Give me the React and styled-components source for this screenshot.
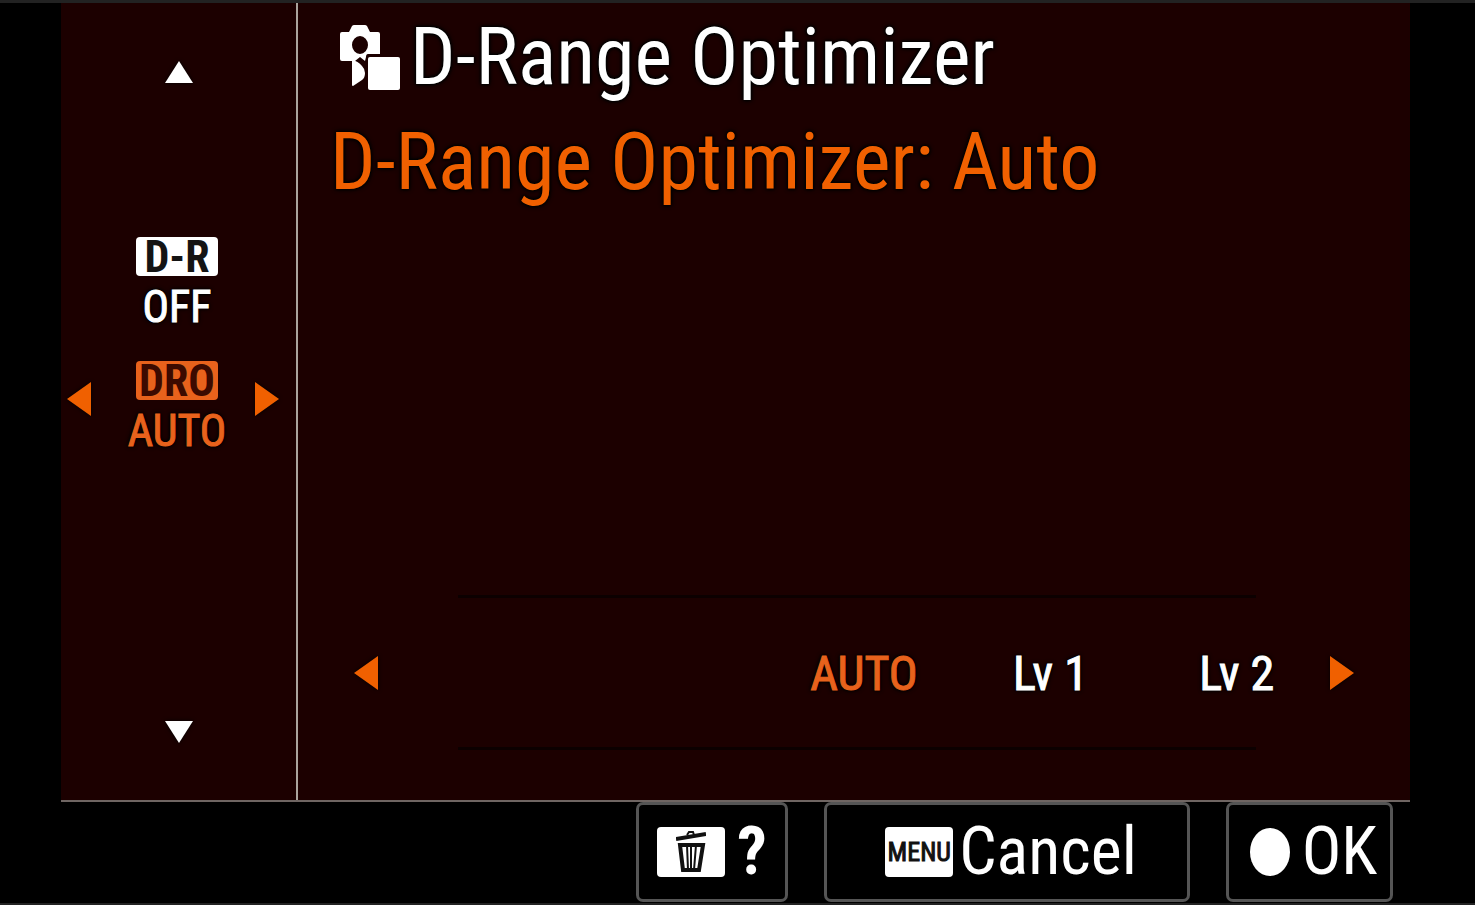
import React, { useState } from "react";
import styled, { createGlobalStyle, css } from "styled-components";

const GlobalStyle = createGlobalStyle`
  *, *::before, *::after { box-sizing: border-box; }
  html, body { margin: 0; background: #000; }
  body, button {
    font-family: "Roboto Condensed", "Liberation Sans Narrow", Roboto, sans-serif;
  }
  h1, p { margin: 0; font-weight: 400; }
`;

const orange = "#f06000";
const softOrange = "#e8621c";

const outline = css`
  text-shadow: 0 0 2px #000, 0 0 3px #000, 0 0 4px #000, 0 0 5px #000;
`;

const Screen = styled.div`
  display: flex;
  flex-direction: column;
  min-height: 100vh;
  padding: 0 65px 0 61px;
  background: #000;
  border-top: 3px solid #222;
  border-bottom: 2px solid #222;
`;

const Panel = styled.div`
  flex: 1;
  display: flex;
  background: #1c0000;
  border-bottom: 2px solid #6f6562;
`;

const Sidebar = styled.nav`
  flex: 0 0 237px;
  display: flex;
  flex-direction: column;
  align-items: center;
  padding: 58px 0 57px;
  border-right: 2px solid #aaa39c;
`;

const ArrowButton = styled.button`
  display: block;
  padding: 0;
  border: 0;
  background: none;
  color: ${(p) => (p.$accent ? orange : "#fff")};
  cursor: pointer;
`;

const ArrowShape = styled.svg`
  display: block;
  overflow: visible;
  fill: currentColor;
  filter: drop-shadow(0 0 2px #000);
`;

const ModeList = styled.div`
  flex: 1;
  align-self: stretch;
  display: flex;
  flex-direction: column;
  gap: 34px;
  padding-top: 154px;
`;

const ModeRow = styled.div`
  display: flex;
  align-items: center;
  justify-content: center;
  padding: 0 17px 0 6px;

  & > ${ArrowButton} { margin-bottom: 14px; }
`;

const ModeButton = styled.button`
  flex: 1;
  display: flex;
  flex-direction: column;
  align-items: center;
  gap: 11px;
  padding: 0 0 0 8px;
  border: 0;
  background: none;
  color: ${(p) => (p.$active ? softOrange : "#fff")};
  font-size: 44px;
  line-height: 40px;
  cursor: pointer;
  -webkit-text-stroke: 1px currentColor;
  ${outline}
`;

const Badge = styled.span`
  display: flex;
  align-items: center;
  justify-content: center;
  width: 82px;
  height: 39px;
  border-radius: 4px;
  background: ${(p) => (p.$active ? softOrange : "#fff")};
  color: ${(p) => (p.$active ? "#3c0a00" : "#141414")};
  font-size: 44px;
  font-weight: 700;
  line-height: 40px;
  text-shadow: none;
  -webkit-text-stroke: 0;
`;

const Content = styled.main`
  flex: 1;
  min-width: 0;
  display: flex;
  flex-direction: column;
  padding: 2px 56px 50px 32px;
`;

const Title = styled.h1`
  display: flex;
  align-items: center;
  gap: 10px;
  padding-left: 10px;
  color: #fff;
  font-size: 80px;
  line-height: 105px;
  white-space: nowrap;
  ${outline}
`;

const Status = styled.p`
  color: ${orange};
  font-size: 80px;
  line-height: 105px;
  white-space: nowrap;
  ${outline}
`;

const LevelBar = styled.div`
  display: flex;
  align-items: center;
  margin-top: auto;
  padding-left: 24px;
`;

const LevelTrack = styled.div`
  flex: 1;
  margin-left: 20px;
  padding: 0 74px 0 60px;
`;

const TrackLine = styled.div`
  height: 3px;
  background: #0c0000;
`;

const Levels = styled.div`
  display: grid;
  grid-template-columns: repeat(5, 1fr);
  align-items: center;
  height: 149px;
  margin: 0 -74px 0 -60px;
  padding-top: 2px;
`;

const LevelButton = styled.button`
  grid-column: ${(p) => p.$slot};
  padding: 0;
  border: 0;
  background: none;
  color: ${(p) => (p.$active ? softOrange : "#fff")};
  font-size: 48px;
  line-height: 56px;
  white-space: nowrap;
  cursor: pointer;
  -webkit-text-stroke: 1px currentColor;
  ${outline}
`;

const Footer = styled.footer`
  display: flex;
  justify-content: flex-end;
  gap: 36px;
  padding: 0 17px 1px 0;
`;

const FooterButton = styled.button`
  display: flex;
  align-items: center;
  justify-content: center;
  gap: ${(p) => p.$gap}px;
  width: ${(p) => p.$width}px;
  height: 100px;
  padding: 0 0 0 ${(p) => p.$inset || 0}px;
  border: 3px solid #555;
  border-radius: 7px;
  background: #000;
  color: #fff;
  font-size: 66px;
  line-height: 80px;
  cursor: pointer;
`;

const KeyCap = styled.span`
  display: flex;
  align-items: center;
  justify-content: center;
  width: 68px;
  height: 50px;
  border-radius: 4px;
  background: #fff;
  color: #111;
  font-size: 26px;
  line-height: 50px;
  -webkit-text-stroke: 1px currentColor;
`;

const HelpMark = styled.span`
  font-weight: 700;
`;

const shapes = {
  up: [28, 22, "14,0 28,22 0,22"],
  down: [28, 22, "0,0 28,0 14,22"],
  left: [24, 34, "24,0 24,34 0,17"],
  right: [24, 34, "0,0 24,17 0,34"],
};

function Arrow({ direction, label, onClick }) {
  const [w, h, points] = shapes[direction];
  return (
    <ArrowButton
      type="button"
      aria-label={label}
      onClick={onClick}
      $accent={direction === "left" || direction === "right"}
    >
      <ArrowShape width={w} height={h} viewBox={`0 0 ${w} ${h}`} aria-hidden="true">
        <polygon points={points} />
      </ArrowShape>
    </ArrowButton>
  );
}

function StillMovieIcon() {
  return (
    <svg width="60" height="66" viewBox="0 0 60 66" fill="#fff" aria-hidden="true">
      <path
        fillRule="evenodd"
        d="M2 7H9L12 1Q13 0 14 0H25Q26 0 27 1L30 7H38Q40 7 40 9V29H28Q26 29 26 32L25 36L20 32L15 36H2Q0 36 0 34V9Q0 7 2 7ZM20 11A8 9 0 1 0 20 29A8 9 0 1 0 20 11Z"
      />
      <path d="M12 35Q18 36 22 41Q25 44 25 48Q25 53 22 55L13 61Q12 61 12 60Z" />
      <rect x="28" y="32" width="32" height="33" rx="2" />
    </svg>
  );
}

function TrashIcon() {
  return (
    <svg width="30" height="42" viewBox="0 0 30 42" fill="none" stroke="#111" aria-hidden="true">
      <path d="M0 8L30 3" strokeWidth="4" />
      <path d="M11 4L13 1L17 1L18 4" strokeWidth="2" />
      <path d="M4 14H27L23 39H7Z" strokeWidth="4" />
      <path d="M11 14L12 39M15 14V39M20 14L18 39" strokeWidth="2" />
    </svg>
  );
}

function FilledCircle() {
  return (
    <svg width="40" height="48" viewBox="0 0 40 48" fill="#fff" aria-hidden="true">
      <ellipse cx="20" cy="24" rx="20" ry="24" />
    </svg>
  );
}

const levels = ["AUTO", "Lv 1", "Lv 2"];

export default function App() {
  const [mode, setMode] = useState("dro");
  const [level, setLevel] = useState(0);
  const step = (by) => setLevel((n) => Math.min(levels.length - 1, Math.max(0, n + by)));

  return (
    <>
      <GlobalStyle />
      <Screen>
        <Panel>
          <Sidebar aria-label="Mode">
            <Arrow direction="up" label="Previous mode" onClick={() => setMode("off")} />
            <ModeList>
              <ModeRow>
                <ModeButton type="button" $active={mode === "off"} onClick={() => setMode("off")}>
                  <Badge $active={mode === "off"}>D-R</Badge>
                  OFF
                </ModeButton>
              </ModeRow>
              <ModeRow>
                <Arrow direction="left" label="Lower level" onClick={() => step(-1)} />
                <ModeButton type="button" $active={mode === "dro"} onClick={() => setMode("dro")}>
                  <Badge $active={mode === "dro"}>DRO</Badge>
                  AUTO
                </ModeButton>
                <Arrow direction="right" label="Higher level" onClick={() => step(1)} />
              </ModeRow>
            </ModeList>
            <Arrow direction="down" label="Next mode" onClick={() => setMode("dro")} />
          </Sidebar>
          <Content>
            <Title>
              <StillMovieIcon />
              D-Range Optimizer
            </Title>
            <Status>D-Range Optimizer: Auto</Status>
            <LevelBar>
              <Arrow direction="left" label="Previous level" onClick={() => step(-1)} />
              <LevelTrack>
                <TrackLine />
                <Levels>
                  {levels.map((name, i) => (
                    <LevelButton
                      key={name}
                      type="button"
                      $slot={i + 3}
                      $active={i === level}
                      onClick={() => setLevel(i)}
                    >
                      {name}
                    </LevelButton>
                  ))}
                </Levels>
                <TrackLine />
              </LevelTrack>
              <Arrow direction="right" label="Next level" onClick={() => step(1)} />
            </LevelBar>
          </Content>
        </Panel>
        <Footer>
          <FooterButton type="button" aria-label="Help" $width={152} $gap={12}>
            <KeyCap>
              <TrashIcon />
            </KeyCap>
            <HelpMark>?</HelpMark>
          </FooterButton>
          <FooterButton type="button" $width={366} $gap={6} $inset={8}>
            <KeyCap>MENU</KeyCap>
            Cancel
          </FooterButton>
          <FooterButton type="button" $width={167} $gap={12} $inset={8}>
            <FilledCircle />
            OK
          </FooterButton>
        </Footer>
      </Screen>
    </>
  );
}
